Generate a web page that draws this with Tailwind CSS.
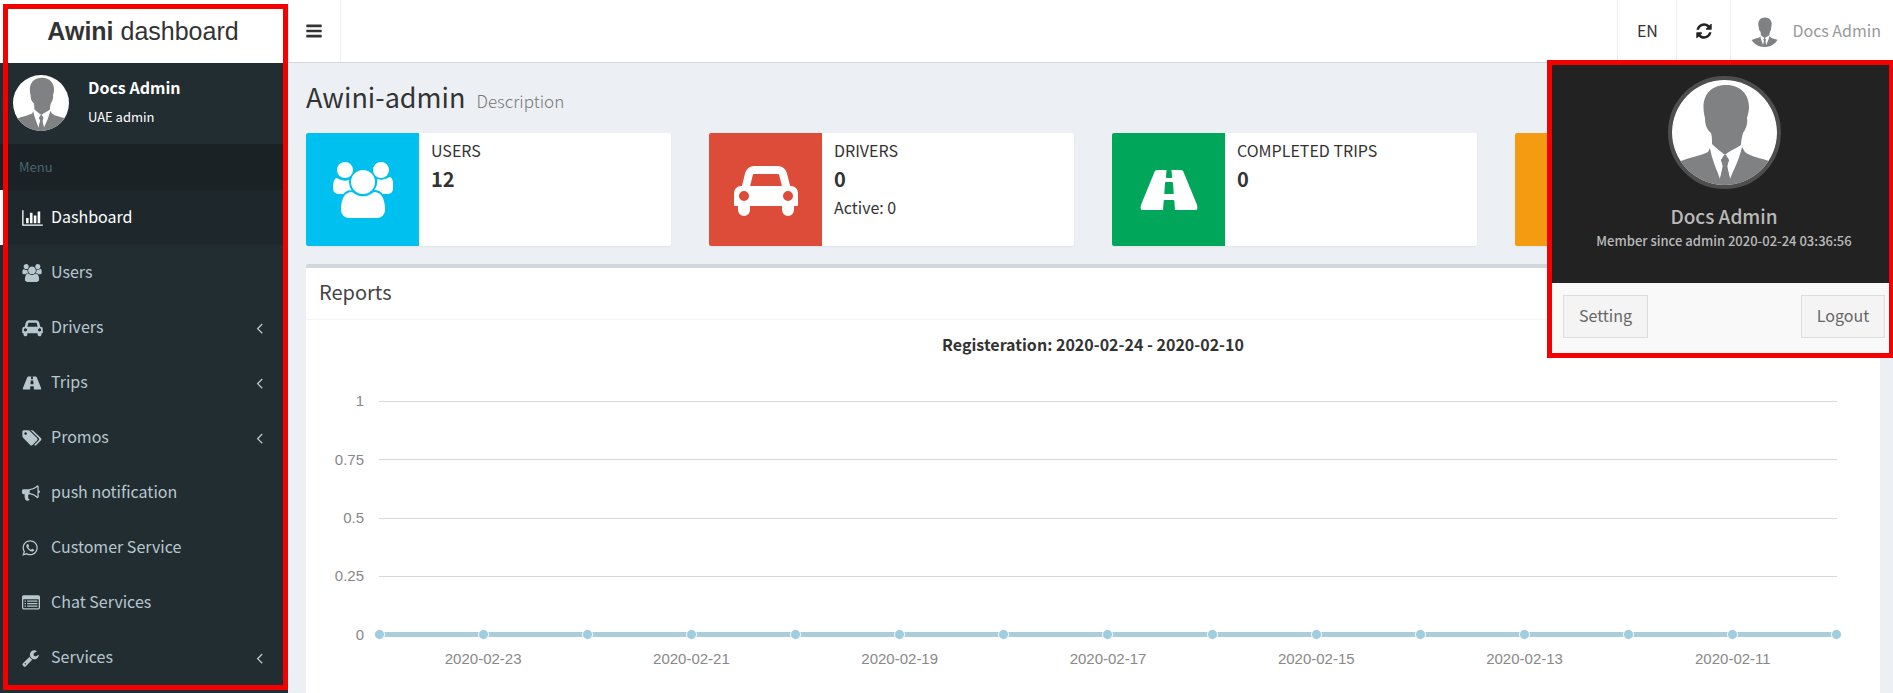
<!DOCTYPE html>
<html lang="en">
<head>
<meta charset="utf-8">
<meta name="viewport" content="width=device-width, initial-scale=1">
<title>Awini dashboard</title>
<script src="https://cdn.jsdelivr.net/npm/@tailwindcss/browser@4"></script>
</head>
<body class="bg-[#ecf0f5] font-['Noto_Sans_CJK_SC','Noto_Sans',sans-serif] text-base leading-6 text-[#333]">

<svg class="hidden" aria-hidden="true">
  <symbol id="bars" viewBox="128 0 1536 1792"><path d="M1664 1344v128q0 26-19 45t-45 19h-1408q-26 0-45-19t-19-45v-128q0-26 19-45t45-19h1408q26 0 45 19t19 45zm0-512v128q0 26-19 45t-45 19h-1408q-26 0-45-19t-19-45v-128q0-26 19-45t45-19h1408q26 0 45 19t19 45zm0-512v128q0 26-19 45t-45 19h-1408q-26 0-45-19t-19-45v-128q0-26 19-45t45-19h1408q26 0 45 19t19 45z"/></symbol>
  <symbol id="chart" viewBox="0 0 2048 1792"><path d="M640 896v512h-256v-512h256zm384-512v1024h-256v-1024h256zm1024 1152v128h-2048v-1536h128v1408h1920zm-640-896v768h-256v-768h256zm384-384v1152h-256v-1152h256z"/></symbol>
  <symbol id="users" viewBox="0 0 1920 1792"><path d="M593 896q-162 5-265 128h-134q-82 0-138-40.5t-56-118.5q0-353 124-353 6 0 43.5 21t97.5 42.5 119 21.5q67 0 133-23-5 37-5 66 0 159 93 287zm1071 637q0 120-73 189.5t-194 69.5h-874q-121 0-194-69.5t-73-189.5q0-53 3.5-103.5t14-109 26.5-108.5 43-97.5 62-81 85.5-53.5 111.5-20q10 0 43 21.5t73 48 107 48 135 21.5 135-21.5 107-48 73-48 43-21.5q61 0 111.5 20t85.5 53.5 62 81 43 97.5 26.5 108.5 14 109 3.5 103.5zm-1024-1277q0 106-75 181t-181 75-181-75-75-181 75-181 181-75 181 75 75 181zm704 384q0 159-112.5 271.5t-271.5 112.5-271.5-112.5-112.5-271.5 112.5-271.5 271.5-112.5 271.5 112.5 112.5 271.5zm576 225q0 78-56 118.5t-138 40.5h-134q-103-123-265-128 93-128 93-287 0-29-5-66 66 23 133 23 59 0 119-21.5t97.5-42.5 43.5-21q124 0 124 353zm-128-609q0 106-75 181t-181 75-181-75-75-181 75-181 181-75 181 75 75 181z"/></symbol>
  <symbol id="car" viewBox="0 0 2048 1792"><path d="M480 1088q0-66-47-113t-113-47-113 47-47 113 47 113 113 47 113-47 47-113zm36-320h1016l-89-357q-2-8-14-17.5t-21-9.5h-768q-9 0-21 9.5t-14 17.5zm1372 320q0-66-47-113t-113-47-113 47-47 113 47 113 113 47 113-47 47-113zm160-96v384q0 14-9 23t-23 9h-96v128q0 80-56 136t-136 56-136-56-56-136v-128h-1024v128q0 80-56 136t-136 56-136-56-56-136v-128h-96q-14 0-23-9t-9-23v-384q0-93 65.5-158.5t158.5-65.5h28l105-419q23-94 104-157.5t179-63.5h768q98 0 179 63.5t104 157.5l105 419h28q93 0 158.5 65.5t65.5 158.5z"/></symbol>
  <symbol id="road" viewBox="0 0 1920 1792"><path d="M1111 996v-4l-24-320q-1-13-11-22.5t-23-9.5h-186q-13 0-23 9.5t-11 22.5l-24 320v4q-1 12 8 20t21 8h244q12 0 21-8t8-20zm758 476q0 64-45 64h-704q13 0 22-9.5t8-22.5l-20-256q-1-13-11-22.5t-23-9.5h-272q-13 0-23 9.5t-11 22.5l-20 256q-1 13 8 22.5t22 9.5h-704q-45 0-45-64 0-71 34-155l417-1010q8-20 28-35.5t42-15.5h339q-13 0-23 9.5t-11 22.5l-15 192q-1 14 8 23t22 9h136q13 0 22-9t8-23l-15-192q-1-13-11-22.5t-23-9.5h339q22 0 42 15.5t28 35.5l417 1010q34 84 34 155z"/></symbol>
  <symbol id="tags" viewBox="0 0 1920 1792"><path d="M448 448q0-53-37.5-90.5t-90.5-37.5-90.5 37.5-37.5 90.5 37.5 90.5 90.5 37.5 90.5-37.5 37.5-90.5zm1067 576q0 53-37 90l-491 492q-39 37-91 37-53 0-90-37l-715-716q-38-37-64.5-101t-26.5-117v-416q0-52 38-90t90-38h416q53 0 117 26.5t102 64.5l715 714q37 39 37 91zm384 0q0 53-37 90l-491 492q-39 37-91 37-36 0-59-14t-53-45l470-470q37-37 37-90 0-52-37-91l-715-714q-38-38-102-64.5t-117-26.5h224q53 0 117 26.5t102 64.5l715 714q37 39 37 91z"/></symbol>
  <symbol id="bullhorn" viewBox="0 0 1792 1792"><path d="M1664 640q53 0 90.5 37.5t37.5 90.5-37.5 90.5-90.5 37.5v384q0 52-38 90t-90 38q-417-347-812-380-58 19-91 66t-31 100.5 40 92.5q-20 33-23 65.5t6 58 33.5 55 48 50 61.5 50.5q-29 58-111.5 83t-168.5 11.5-132-55.5q-7-23-29.5-87.5t-32-94.5-23-89-15-101 3.5-98.5 22-110.5h-122q-66 0-113-47t-47-113v-192q0-66 47-113t113-47h480q435 0 896-384 52 0 90 38t38 90v384zm-128 604v-954q-394 302-768 343v270q377 42 768 341z"/></symbol>
  <symbol id="whatsapp" viewBox="128 0 1536 1792"><path d="M1113 974q13 0 97.5 44t89.5 53q2 5 2 15 0 33-17 76-16 39-71 65.5t-102 26.5q-57 0-190-62-98-45-170-118t-148-185q-72-107-71-194v-8q3-91 74-158 24-22 52-22 6 0 18 1.5t19 1.5q19 0 26.5 6.5t15.5 27.5q8 20 33 88t25 75q0 21-34.5 57.5t-34.5 46.5q0 7 5 15 34 73 102 137 56 53 151 101 12 7 22 7 15 0 54-48.5t52-48.5zm-203 530q127 0 243.5-50t200.5-134 134-200.5 50-243.5-50-243.5-134-200.5-200.5-134-243.5-50-243.5 50-200.5 134-134 200.5-50 243.5q0 203 120 368l-79 233 242-77q158 104 345 104zm0-1382q153 0 292.5 60t240.5 161 161 240.5 60 292.5-60 292.5-161 240.5-240.5 161-292.5 60q-195 0-365-94l-417 134 136-405q-108-178-108-389 0-153 60-292.5t161-240.5 240.5-161 292.5-60z"/></symbol>
  <symbol id="list" viewBox="0 0 1792 1792"><path fill-rule="evenodd" d="M160 128h1472q66 0 113 47t47 113v1088q0 66-47 113t-113 47h-1472q-66 0-113-47t-47-113v-1088q0-66 47-113t113-47zm-32 416v832q0 32 32 32h1472q32 0 32-32v-832q0-32-32-32h-1472q-32 0-32 32z"/><path d="M256 640h128v128H256zM512 640h1024v128H512zM256 896h128v128H256zM512 896h1024v128H512zM256 1152h128v128H256zM512 1152h1024v128H512z"/></symbol>
  <symbol id="wrench" viewBox="64 0 1664 1792"><path d="M448 1472q0-26-19-45t-45-19-45 19-19 45 19 45 45 19 45-19 19-45zm644-420l-682 682q-37 37-90 37-52 0-91-37l-106-108q-38-36-38-90 0-53 38-91l681-681q39 98 114.5 173.5t173.5 114.5zm634-435q0 39-23 106-47 134-164.5 217.5t-258.5 83.5q-185 0-316.5-131.5t-131.5-316.5 131.5-316.5 316.5-131.5q58 0 121.5 16.5t107.5 46.5q16 11 16 28t-16 28l-293 169v224l193 107q5-3 79-48.5t135.5-81 70.5-35.5q15 0 23.5 10t8.5 25z"/></symbol>
  <symbol id="refresh" viewBox="128 0 1536 1792"><path d="M1639 1056q0 5-1 7-64 268-268 434.5t-478 166.5q-146 0-282.5-55t-243.5-157l-129 129q-19 19-45 19t-45-19-19-45v-448q0-26 19-45t45-19h448q26 0 45 19t19 45-19 45l-137 137q71 66 161 102t187 36q134 0 250-65t186-179q11-17 53-117 8-23 30-23h192q13 0 22.5 9.5t9.5 22.5zm25-800v448q0 26-19 45t-45 19h-448q-26 0-45-19t-19-45 19-45l138-138q-148-137-349-137-134 0-250 65t-186 179q-11 17-53 117-8 23-30 23h-199q-13 0-22.5-9.5t-9.5-22.5v-7q65-268 270-434.5t480-166.5q146 0 284 55.5t245 156.5l130-129q19-19 45-19t45 19 19 45z"/></symbol>
  <symbol id="angle" viewBox="576 0 640 1792"><path d="M1203 544q0 13-10 23l-393 393 393 393q10 10 10 23t-10 23l-50 50q-10 10-23 10t-23-10l-466-466q-10-10-10-23t10-23l466-466q10-10 23-10t23 10l50 50q10 10 10 23z"/></symbol>
  <symbol id="avatar" viewBox="0 0 105 105">
    <rect width="105" height="105" fill="#fff"/>
    <path fill="#808183" d="M54 5C69 5 77 15 77 27C77 31 76 34 75 38C76 43 74 49 71 53C70 57 69 61 69 65C63 69 57 71 53 75C48 71 43 67 40 64C40 60 40 56 39 53C34 49 33 43 33 38C32 34 31.500 31 31.500 27C31.500 15 39 5 54 5Z"/>
    <path fill="#808183" d="M36 72L38 68C40 80 45 90 48 99L51 87L49 80L52 75H54L57 80L55 87L58 99C62 89 67 80 70 67L73 72C79 77 89 78 97 81L105 86V105H0V86L9 81C18 77 29 76 36 72Z"/>
    <path fill="#808183" d="M49 80L53 75L57 80L55 85L58 99L53 105L48 99L51 85Z"/>
  </symbol>
</svg>

<div class="flex min-h-screen">

  <aside class="relative flex w-72 shrink-0 flex-col bg-[#222d32] text-[#b8c7ce]">
    <a href="#" class="flex h-[63px] items-center justify-center bg-white pr-[2px] pb-[2px] font-['Liberation_Sans',Arial,sans-serif] text-[25px] text-[#333]"><span><b>Awini</b> dashboard</span></a>
    <div class="flex h-[81px] items-start pt-3 pl-[13px] text-white">
      <svg class="size-14 rounded-full" role="img" aria-label="Docs Admin"><use href="#avatar"/></svg>
      <div class="pl-[19px]">
        <p class="font-semibold">Docs Admin</p>
        <p class="pt-2 text-[13px] leading-5">UAE admin</p>
      </div>
    </div>
    <h2 class="flex h-[46px] items-center bg-[#1a2226] pl-[19px] text-[13px] text-[#4b646f]">Menu</h2>
    <nav>
      <a href="#" class="flex h-[55px] items-center border-l-4 border-white bg-[#1e282c] pr-[25px] pl-[18px] text-white"><svg class="mr-2 h-[18px] w-[21px] fill-current"><use href="#chart"/></svg><span class="pb-[3px]">Dashboard</span></a>
      <a href="#" class="flex h-[55px] items-center pr-[25px] pl-[22px]"><span class="w-[29px]"><svg class="h-[18px] w-[20px] fill-current"><use href="#users"/></svg></span><span class="pb-[3px]">Users</span></a>
      <a href="#" class="flex h-[55px] items-center pr-[25px] pl-[22px]"><span class="w-[29px]"><svg class="h-[18px] w-[21px] fill-current"><use href="#car"/></svg></span><span class="pb-[3px]">Drivers</span><svg class="ml-auto h-[18px] w-[7px] fill-current"><use href="#angle"/></svg></a>
      <a href="#" class="flex h-[55px] items-center pr-[25px] pl-[22px]"><span class="w-[29px]"><svg class="h-[18px] w-[20px] fill-current"><use href="#road"/></svg></span><span class="pb-[3px]">Trips</span><svg class="ml-auto h-[18px] w-[7px] fill-current"><use href="#angle"/></svg></a>
      <a href="#" class="flex h-[55px] items-center pr-[25px] pl-[22px]"><span class="w-[29px]"><svg class="h-[18px] w-[20px] fill-current"><use href="#tags"/></svg></span><span class="pb-[3px]">Promos</span><svg class="ml-auto h-[18px] w-[7px] fill-current"><use href="#angle"/></svg></a>
      <a href="#" class="flex h-[55px] items-center pr-[25px] pl-[22px]"><span class="w-[29px]"><svg class="h-[18px] w-[18px] fill-current"><use href="#bullhorn"/></svg></span><span class="pb-[3px]">push notification</span></a>
      <a href="#" class="flex h-[55px] items-center pr-[25px] pl-[22px]"><span class="w-[29px]"><svg class="h-[18px] w-[16px] fill-current"><use href="#whatsapp"/></svg></span><span class="pb-[3px]">Customer Service</span></a>
      <a href="#" class="flex h-[55px] items-center pr-[25px] pl-[22px]"><span class="w-[29px]"><svg class="h-[18px] w-[18px] fill-current"><use href="#list"/></svg></span><span class="pb-[3px]">Chat Services</span></a>
      <a href="#" class="flex h-[55px] items-center pr-[25px] pl-[22px]"><span class="w-[29px]"><svg class="h-[18px] w-[17px] fill-current"><use href="#wrench"/></svg></span><span class="pb-[3px]">Services</span><svg class="ml-auto h-[18px] w-[7px] fill-current"><use href="#angle"/></svg></a>
    </nav>
    <div class="pointer-events-none absolute inset-x-0 top-1 bottom-[3px] ml-[3px] border-[5px] border-[#f50000]"></div>
  </aside>

  <div class="flex min-w-0 flex-1 flex-col">
    <header class="relative flex h-[63px] items-stretch justify-between border-b border-[#d2d6de] bg-white">
      <button type="button" aria-label="Toggle navigation" class="flex w-[53px] items-center justify-center border-x border-[#eee] pr-[2px]"><svg class="h-[18px] w-4 fill-[#333]"><use href="#bars"/></svg></button>
      <div class="flex items-stretch">
        <button type="button" class="flex w-[59px] items-center justify-center border-l border-[#eee] pb-[2px]">EN</button>
        <button type="button" aria-label="Refresh" class="flex w-[54px] items-center justify-center border-l border-[#eee]"><svg class="h-[18px] w-4 fill-[#222]"><use href="#refresh"/></svg></button>
        <button type="button" aria-expanded="true" class="flex items-center border-l border-[#eee] pr-3 pl-[18px] text-[#999]"><svg class="mr-3 size-[31px] rounded-full"><use href="#avatar"/></svg><span class="pb-[2px]">Docs Admin</span></button>
      </div>

      <div class="absolute top-[60px] -right-px z-10 w-[347px] border-[5px] border-[#f50000]">
        <div class="flex h-[218px] flex-col items-center bg-[#222] pt-[11px] pl-[7px] text-white/70">
          <svg class="size-[113px] rounded-full border-4 border-[#4e4e4e]" role="img" aria-label="Docs Admin"><use href="#avatar"/></svg>
          <p class="mt-[15px] text-[19px] leading-6 font-medium">Docs Admin</p>
          <p class="mt-[3px] text-[13px] leading-5 font-medium">Member since admin 2020-02-24 03:36:56</p>
        </div>
        <div class="flex h-[70px] items-start justify-between bg-[#f9f9f9] pt-3 pr-1 pl-[11px] text-[#666]">
          <a href="#" class="flex h-[43px] w-[85px] items-center justify-center border border-[#ddd] bg-[#f4f4f4] pb-[3px]">Setting</a>
          <a href="#" class="flex h-[43px] w-[84px] items-center justify-center border border-[#ddd] bg-[#f4f4f4] pb-[3px]">Logout</a>
        </div>
      </div>
    </header>

    <main class="flex flex-1 flex-col pr-[13px] pl-[18px]">
      <h1 class="flex items-baseline gap-[11px] pt-[18px] text-[27px] leading-8">Awini-admin <small class="text-[17px] font-light text-[#777]">Description</small></h1>

      <section class="mt-4 grid grid-cols-4 gap-[38px]">
        <div class="flex h-[113px] overflow-hidden rounded-xs bg-white shadow-xs">
          <div class="flex w-[113px] shrink-0 items-center justify-center bg-[#00c0ef]"><svg class="h-[56px] w-[60px] fill-white"><use href="#users"/></svg></div>
          <div class="px-3 pt-[5px]"><p>USERS</p><p class="pt-[5px] text-xl leading-6 font-bold">12</p></div>
        </div>
        <div class="flex h-[113px] overflow-hidden rounded-xs bg-white shadow-xs">
          <div class="flex w-[113px] shrink-0 items-center justify-center bg-[#dd4b39]"><svg class="h-[56px] w-[64px] fill-white"><use href="#car"/></svg></div>
          <div class="px-3 pt-[5px]"><p>DRIVERS</p><p class="pt-[5px] text-xl leading-6 font-bold">0</p><p class="pt-1">Active: 0</p></div>
        </div>
        <div class="flex h-[113px] overflow-hidden rounded-xs bg-white shadow-xs">
          <div class="flex w-[113px] shrink-0 items-center justify-center bg-[#00a65a]"><svg class="h-[56px] w-[60px] fill-white"><use href="#road"/></svg></div>
          <div class="px-3 pt-[5px]"><p>COMPLETED TRIPS</p><p class="pt-[5px] text-xl leading-6 font-bold">0</p></div>
        </div>
        <div class="flex h-[113px] overflow-hidden rounded-xs bg-white shadow-xs">
          <div class="w-[113px] shrink-0 bg-[#f39c12]"></div>
        </div>
      </section>

      <section class="mt-[18px] flex-1 rounded-t-xs border-t-4 border-[#d2d6de] bg-white">
        <h2 class="flex h-[52px] items-center border-b border-[#f4f4f4] px-[13px] pb-[3px] text-xl text-[#444]">Reports</h2>
        <p class="pt-3 text-center font-bold">Registeration: 2020-02-24 - 2020-02-10</p>
        <div class="mt-4 pr-[43px] pl-[13px] font-['Liberation_Sans',Arial,sans-serif] text-[15px] leading-5 text-[#888]">
          <div class="flex h-[292px] flex-col">
            <div class="flex flex-1 items-center"><span class="w-[45px] text-right">1</span><div class="ml-[15px] h-px flex-1 bg-[#d8d8d8]"></div></div>
            <div class="flex flex-1 items-center"><span class="w-[45px] text-right">0.75</span><div class="ml-[15px] h-px flex-1 bg-[#d8d8d8]"></div></div>
            <div class="flex flex-1 items-center"><span class="w-[45px] text-right">0.5</span><div class="ml-[15px] h-px flex-1 bg-[#d8d8d8]"></div></div>
            <div class="flex flex-1 items-center"><span class="w-[45px] text-right">0.25</span><div class="ml-[15px] h-px flex-1 bg-[#d8d8d8]"></div></div>
            <div class="flex flex-1 items-center"><span class="w-[45px] text-right">0</span>
              <div class="ml-[15px] flex h-[5px] flex-1 items-center justify-between bg-[#a9cdd9]">
                <i class="-ml-[5px] size-[11px] rounded-full border border-white bg-[#9fcddd]"></i>
                <i class="size-[11px] rounded-full border border-white bg-[#9fcddd]"></i>
                <i class="size-[11px] rounded-full border border-white bg-[#9fcddd]"></i>
                <i class="size-[11px] rounded-full border border-white bg-[#9fcddd]"></i>
                <i class="size-[11px] rounded-full border border-white bg-[#9fcddd]"></i>
                <i class="size-[11px] rounded-full border border-white bg-[#9fcddd]"></i>
                <i class="size-[11px] rounded-full border border-white bg-[#9fcddd]"></i>
                <i class="size-[11px] rounded-full border border-white bg-[#9fcddd]"></i>
                <i class="size-[11px] rounded-full border border-white bg-[#9fcddd]"></i>
                <i class="size-[11px] rounded-full border border-white bg-[#9fcddd]"></i>
                <i class="size-[11px] rounded-full border border-white bg-[#9fcddd]"></i>
                <i class="size-[11px] rounded-full border border-white bg-[#9fcddd]"></i>
                <i class="size-[11px] rounded-full border border-white bg-[#9fcddd]"></i>
                <i class="size-[11px] rounded-full border border-white bg-[#9fcddd]"></i>
                <i class="-mr-[5px] size-[11px] rounded-full border border-white bg-[#9fcddd]"></i>
              </div>
            </div>
          </div>
          <div class="-mt-[15px] ml-[60px] grid grid-cols-7 text-center">
            <span>2020-02-23</span><span>2020-02-21</span><span>2020-02-19</span><span>2020-02-17</span><span>2020-02-15</span><span>2020-02-13</span><span>2020-02-11</span>
          </div>
        </div>
      </section>
    </main>
  </div>
</div>
</body>
</html>
